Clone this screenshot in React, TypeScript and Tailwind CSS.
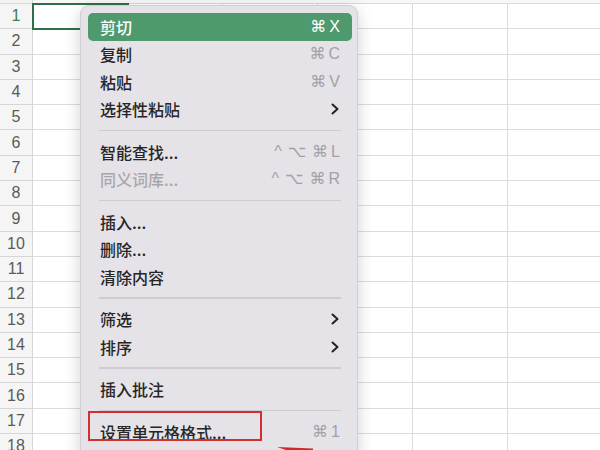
import React from "react";

type Item =
  | { type: "sep" }
  | { type: "item"; label: string; shortcut?: string[]; sub?: boolean; disabled?: boolean; active?: boolean };

const items: Item[] = [
  { type: "item", label: "剪切", shortcut: ["⌘", "X"], active: true },
  { type: "item", label: "复制", shortcut: ["⌘", "C"] },
  { type: "item", label: "粘贴", shortcut: ["⌘", "V"] },
  { type: "item", label: "选择性粘贴", sub: true },
  { type: "sep" },
  { type: "item", label: "智能查找...", shortcut: ["^", "⌥", "⌘", "L"] },
  { type: "item", label: "同义词库...", shortcut: ["^", "⌥", "⌘", "R"], disabled: true },
  { type: "sep" },
  { type: "item", label: "插入..." },
  { type: "item", label: "删除..." },
  { type: "item", label: "清除内容" },
  { type: "sep" },
  { type: "item", label: "筛选", sub: true },
  { type: "item", label: "排序", sub: true },
  { type: "sep" },
  { type: "item", label: "插入批注" },
  { type: "sep" },
  { type: "item", label: "设置单元格格式...", shortcut: ["⌘", "1"] },
];

const cjk = { fontFamily: '"Noto Sans CJK SC", "Noto Sans", sans-serif' };
const latin = { fontFamily: '"Liberation Sans", "DejaVu Sans", sans-serif' };

function Chevron() {
  return (
    <svg width="8" height="12" viewBox="0 0 8 12" className="mr-[1px]">
      <polyline points="1.5,1.5 6.5,6 1.5,10.5" fill="none" stroke="#222" strokeWidth="2" strokeLinecap="round" strokeLinejoin="round" />
    </svg>
  );
}

export default function App() {
  const rows = Array.from({ length: 18 }, (_, i) => i + 1);
  const cols = Array.from({ length: 6 }, (_, i) => i);
  return (
    <div className="relative w-[600px] h-[450px] overflow-hidden bg-white" style={latin}>
      {/* header strip */}
      <div className="flex h-[3px]">
        <div className="w-[33px] shrink-0 bg-[#f3f3f3] border-r border-[#d9d9d9]" />
        <div className="flex-1 bg-[#f7f7f7]" />
      </div>
      <div className="border-t border-[#dadada]">
        {rows.map((r) => (
          <div key={r} className="flex h-[25.3px]">
            <div
              className={`w-[33px] shrink-0 bg-[#f5f5f5] border-r border-b border-[#d6d6d6] flex items-center justify-center text-[16px] ${
                r === 1 ? "text-[#3b7d55]" : "text-[#5a5a5a]"
              }`}
            >
              {r}
            </div>
            {cols.map((c) => (
              <div key={c} className="w-[95px] shrink-0 border-r border-b border-[#dcdcdc]" />
            ))}
          </div>
        ))}
      </div>

      {/* selected cell A1 */}
      <div className="absolute left-[32px] top-[3px] w-[97px] h-[26.5px] border-2 border-[#2f6f48]" />

      {/* context menu */}
      <div
        className="absolute left-[80px] top-[5px] w-[278px] h-[470px] rounded-[9px] bg-[#e6e3e8] border border-[#d2cfd4] shadow-[0_4px_16px_rgba(0,0,0,0.18)] pl-[7px] pr-[5px] pt-[7px]"
      >
        {items.map((it, i) =>
          it.type === "sep" ? (
            <div key={i} className="h-[15px] flex items-center px-[11px]">
              <div className="h-[1.5px] w-full bg-[#cfccd1]" />
            </div>
          ) : (
            <div
              key={i}
              className={`h-[27.5px] flex items-center justify-between px-3 rounded-[5px] ${
                it.active ? "bg-[#4e9a6e] text-white" : it.disabled ? "text-[#a9a6ab]" : "text-[#262626]"
              }`}
            >
              <span className="text-[16px] leading-none font-medium" style={cjk}>
                {it.label}
              </span>
              {it.shortcut && (
                <span
                  className={`flex items-center gap-[3px] text-[16px] leading-none ${
                    it.active ? "text-white" : "text-[#a3a0a6]"
                  }`}
                  style={latin}
                >
                  {it.shortcut.map((s, j) => (
                    <span key={j} className={s === "^" || s === "⌥" ? "mr-[3px]" : ""}>
                      {s}
                    </span>
                  ))}
                </span>
              )}
              {it.sub && <Chevron />}
            </div>
          )
        )}
      </div>

      {/* red highlight box */}
      <div className="absolute left-[88px] top-[411px] w-[174px] h-[30px] border-2 border-[#d1302f]" />

      {/* red arrow */}
      <svg className="absolute left-0 top-0" width="600" height="450" viewBox="0 0 600 450">
        <polygon points="277,447 313,448.5 313,450 286,450" fill="#d12a2a" />
      </svg>
    </div>
  );
}
